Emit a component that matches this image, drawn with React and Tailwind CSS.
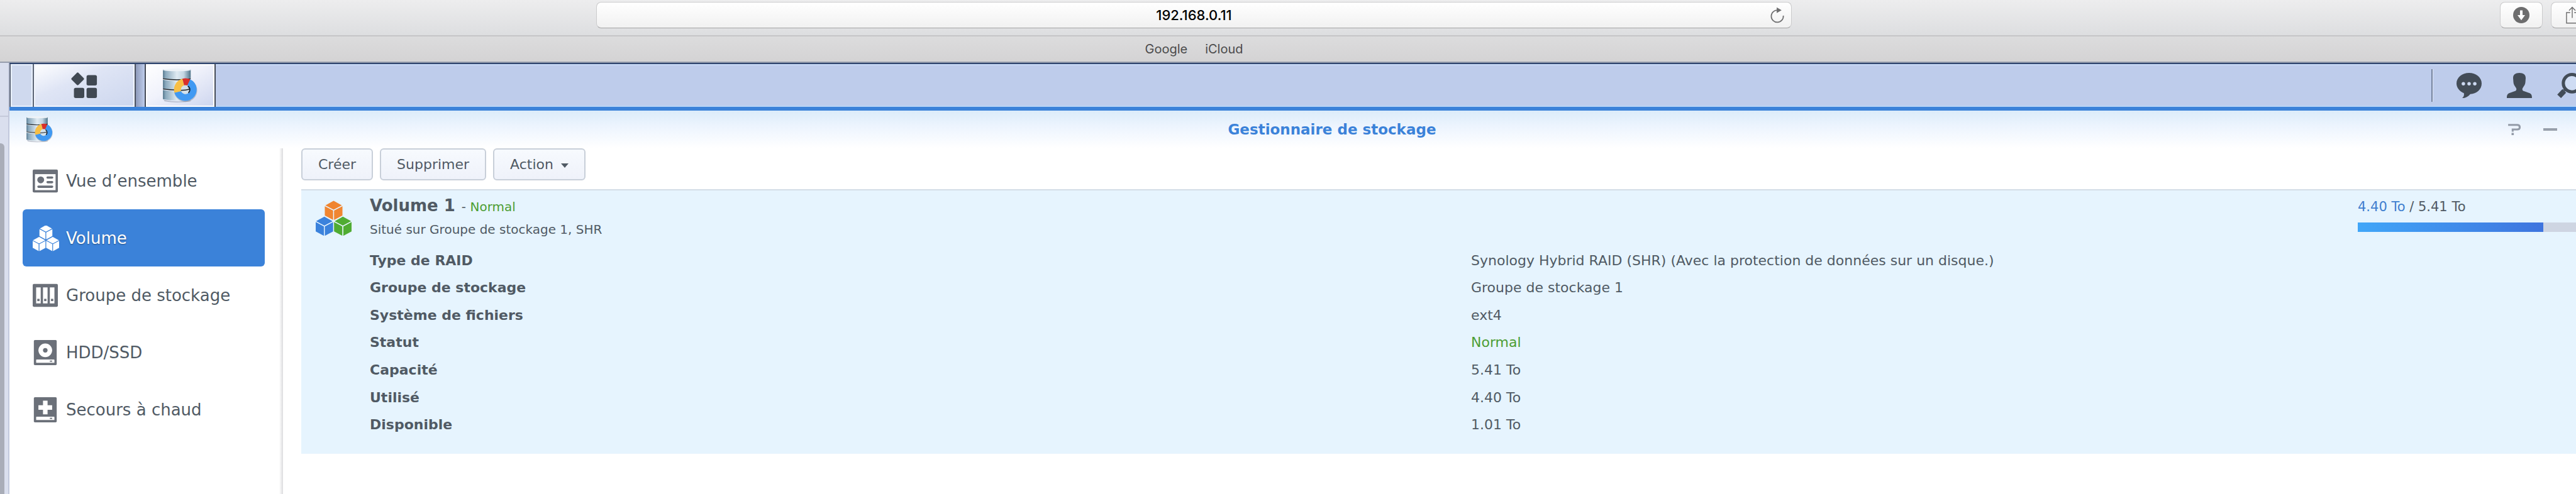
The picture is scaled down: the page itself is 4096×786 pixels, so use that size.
import React from "react";

function DiskIcon({ className, id }) {
  return (
    <svg viewBox="0 0 62 61" className={className} aria-hidden="true">
      <defs>
        <linearGradient id={id} x1="0" x2="1" y1="0" y2="0">
          <stop offset="0" stopColor="#587a90" />
          <stop offset="0.1" stopColor="#8aa9bd" />
          <stop offset="0.5" stopColor="#dfeaf2" />
          <stop offset="0.75" stopColor="#c3d6e2" />
          <stop offset="1" stopColor="#4f7489" />
        </linearGradient>
      </defs>
      <path d="M1 55 Q24 61 49 56 V58 Q24 62 3 58 Z" fill="#9aa0b0" opacity="0.6" />
      <path d="M0 2 H49 V17 Q25 22 0 17 Z" fill={`url(#${id})`} />
      <path d="M0 20 Q25 24 49 20 V35 Q25 40 0 35 Z" fill={`url(#${id})`} />
      <path d="M0 38 Q25 42 49 38 V54 Q25 59 0 54 Z" fill={`url(#${id})`} />
      <path d="M0 18 Q25 22 49 18" fill="none" stroke="#1d2226" strokeWidth="1.6" />
      <path d="M0 36 Q25 40 49 36" fill="none" stroke="#1d2226" strokeWidth="1.6" />
      <ellipse cx="24.5" cy="2.4" rx="24.5" ry="2.4" fill="#edf2f7" />
      <circle cx="40" cy="38.5" r="20.5" fill="#5b6472" opacity="0.3" />
      <circle cx="40" cy="37.3" r="9" fill="#d3e1ea" />
      <path d="M31 38.500 Q40 38.500 49 36" fill="none" stroke="#1d2226" strokeWidth="1.6" />
      <path d="M48 19 A20 20 0 1 1 20.3 42.7 L32 39.8 A8 8 0 1 0 43 30 Z" fill="#4099f2" />
      <path d="M20.3 42.7 A20 20 0 0 1 34.5 17.9 L37.5 29.6 A8 8 0 0 0 32 39.8 Z" fill="#f8bf45" />
      <path d="M34.5 17.9 A20 20 0 0 1 48 19 L43 30 A8 8 0 0 0 37.5 29.6 Z" fill="#d8302b" />
      <path d="M44 31 A7.6 7.6 0 0 1 45 43" fill="none" stroke="#15202b" strokeWidth="2" />
    </svg>
  );
}

function Cube({ x, y, fill, gap }) {
  const p = (pts) => pts.map(([a, b]) => `${a + x},${b + y}`).join(" ");
  return (
    <g fill={fill} stroke={gap} strokeWidth="1.5" strokeLinejoin="round">
      <polygon points={p([[0, -0.5], [16, 8.5], [0, 17], [-16, 8.5]])} />
      <polygon points={p([[-16, 8.5], [0, 17], [0, 35], [-16, 26.5]])} />
      <polygon points={p([[16, 8.5], [0, 17], [0, 35], [16, 26.5]])} />
    </g>
  );
}

function CubesIcon({ className, colors, gap }) {
  return (
    <svg viewBox="0 0 62 62" className={className} aria-hidden="true">
      <Cube x={31} y={0} fill={colors[0]} gap={gap} />
      <Cube x={15} y={27.5} fill={colors[1]} gap={gap} />
      <Cube x={47} y={27.5} fill={colors[2]} gap={gap} />
    </svg>
  );
}

const GREY = "#6b7079";

function OverviewIcon() {
  return (
    <svg viewBox="0 0 44 44" className="size-10" aria-hidden="true">
      <rect y="2" width="44" height="40" rx="2" fill={GREY} />
      <rect x="4" y="10" width="36" height="28" fill="#fff" />
      <circle cx="14" cy="20" r="6" fill={GREY} />
      <path d="M26 16 H34 M26 24 H34 M10 32 H34" stroke={GREY} strokeWidth="4" strokeLinecap="round" />
    </svg>
  );
}

function GroupIcon() {
  return (
    <svg viewBox="0 0 44 44" className="size-10" aria-hidden="true">
      <rect y="2" width="44" height="40" rx="2" fill={GREY} />
      {[6, 18, 30].map((x) => (
        <g key={x}>
          <rect x={x} y="8" width="8" height="28" fill="#fff" />
          <rect x={x + 2} y="28" width="4" height="4" fill={GREY} />
        </g>
      ))}
    </svg>
  );
}

function DriveIcon({ spare }) {
  return (
    <svg viewBox="0 0 44 44" className="size-10" aria-hidden="true">
      <rect x="2" width="40" height="44" rx="2" fill={GREY} />
      {spare ? (
        <path d="M18 6 H26 V14 H34 V22 H26 V30 H18 V22 H10 V14 H18 Z" fill="#fff" />
      ) : (
        <>
          <circle cx="22" cy="18" r="12" fill="#fff" />
          <circle cx="22" cy="18" r="4" fill={GREY} />
        </>
      )}
      <rect x="6" y="34" width="32" height="6" rx="1" fill="#fff" />
      <rect x="30" y="36" width="4" height="2" fill={GREY} />
    </svg>
  );
}

function AppsIcon() {
  return (
    <svg viewBox="0 0 46 46" className="size-[42px]" fill="#414953" aria-hidden="true">
      <rect x="3" y="3" width="17" height="17" rx="2.5" transform="rotate(45 11.5 11.5)" />
      <rect x="27" y="5" width="18" height="18" rx="3" />
      <rect x="5" y="27" width="18" height="18" rx="3" />
      <rect x="27" y="27" width="18" height="18" rx="3" />
    </svg>
  );
}

function ChatIcon() {
  return (
    <svg viewBox="0 0 44 44" className="size-10" aria-hidden="true">
      <path d="M22 0 C34 0 44 8 44 18.5 C44 29 35 37 24 37 C21 41 16 44 10 44 C13 41.500 13.500 39 13 35.500 C5 32 0 26 0 18.500 C0 8 10 0 22 0 Z" fill="#434c57" />
      <circle cx="12" cy="19" r="3" fill="#cdd9f1" />
      <circle cx="22" cy="19" r="3" fill="#cdd9f1" />
      <circle cx="32" cy="19" r="3" fill="#cdd9f1" />
    </svg>
  );
}

function UserIcon() {
  return (
    <svg viewBox="0 0 44 44" className="size-10" aria-hidden="true">
      <path d="M22 0 C29 0 33 3 33 9 L32.500 16 C32.500 20 30 23 28 26 C26.500 28 27 31 30 32 L40 35.500 C43 37 44 39 44 44 H0 C0 39 1 37 4 35.500 L14 32 C17 31 17.500 28 16 26 C14 23 11.500 20 11.500 16 L11 9 C11 3 15 0 22 0 Z" fill="#434c57" />
    </svg>
  );
}

function SearchIcon() {
  return (
    <svg viewBox="0 0 44 44" className="size-10 shrink-0" aria-hidden="true">
      <circle cx="26" cy="18" r="15.200" fill="#cfdcf3" stroke="#434c57" strokeWidth="5.600" />
      <path d="M15 28 L12 31" stroke="#434c57" strokeWidth="5" />
      <path d="M12.500 31.500 L3.500 41" stroke="#434c57" strokeWidth="9" />
    </svg>
  );
}

function BrowserChrome() {
  return (
    <header className="font-[Inter,sans-serif]">
      <div className="grid h-[58px] grid-cols-[948fr_1901fr_1247fr] items-start border-b-2 border-[#c5c5c7] bg-linear-to-b from-[#ededee] to-[#dddee0] pt-[3px]">
        <div />
        <div className="flex h-[42px] items-center rounded-lg border border-[#cbcbcc] border-b-[#a3a3a4] bg-linear-to-b from-white to-[#f1f1f1] pr-1 pl-10">
          <input
            aria-label="Adresse"
            defaultValue="192.168.0.11"
            className="min-w-0 flex-1 bg-transparent text-center text-[22px] leading-7 font-medium text-black outline-none"
          />
          <button aria-label="Recharger" className="flex h-8 w-9 items-center justify-center">
            <svg viewBox="0 0 24 28" className="h-[26px] w-[22px]" aria-hidden="true">
              <path d="M13 5.500 A10.500 10.500 0 1 0 22.500 15" fill="none" stroke="#6f6f70" strokeWidth="1.900" />
              <path d="M11 0.500 L19.500 5.500 L11 10.500 Z" fill="#6f6f70" />
            </svg>
          </button>
        </div>
        <div className="flex justify-end gap-[13px]">
          <button aria-label="Téléchargements" className="flex h-[42px] w-[68px] items-center justify-center rounded-lg border border-[#cbcbcc] border-b-[#a3a3a4] bg-linear-to-b from-white to-[#f1f1f1]">
            <svg viewBox="0 0 28 28" className="size-[26px]" aria-hidden="true">
              <circle cx="14" cy="14" r="14" fill="#6d6d6e" />
              <path d="M11.800 6 H16.200 V14 H20.500 L14 23 L7.500 14 H11.800 Z" fill="#fff" />
            </svg>
          </button>
          <button aria-label="Partager" className="flex h-[42px] w-10 items-center overflow-hidden rounded-l-lg border border-r-0 border-[#cbcbcc] border-b-[#a3a3a4] bg-linear-to-b from-white to-[#f1f1f1] pl-[23px]">
            <svg viewBox="0 0 22 30" className="h-[28px] w-[20px] shrink-0" fill="none" stroke="#6f6f70" strokeWidth="1.600" aria-hidden="true">
              <path d="M7.500 10.500 H1 V29 H21 V10.500 H14.500" />
              <path d="M11 20 V1.500 M5.500 7 L11 1.200 L16.500 7" />
            </svg>
          </button>
        </div>
      </div>
      <nav aria-label="Favoris" className="grid h-10 grid-cols-[948fr_1901fr_1247fr] items-center bg-linear-to-b from-[#dcdcdd] to-[#d4d3d4]">
        <div />
        <div className="flex justify-center gap-7 text-[20px] leading-6 text-[#4b4b4c]">
          <a href="#google">Google</a>
          <a href="#icloud">iCloud</a>
        </div>
      </nav>
    </header>
  );
}

function Taskbar() {
  return (
    <div className="flex h-[76px] items-stretch border-t-2 border-b-6 border-t-[#2f456f] border-b-[#3b82d9] bg-[#becceb]">
      <div className="w-[39px] border-x-2 border-[#5b6474] bg-[#cfd9ee] shadow-[inset_0_0_0_2px_#e9f1fd]" />
      <button aria-label="Menu principal" className="flex w-[160px] items-center justify-center bg-linear-to-br from-white via-[#dfe5f5] via-40% to-[#ccd6ee] shadow-[inset_0_0_0_2px_#f1f5fd]">
        <AppsIcon />
      </button>
      <div className="w-[16px] border-l-2 border-[#4b5260] bg-linear-to-r from-[#8f9bbb] to-[#becceb]" />
      <button aria-label="Gestionnaire de stockage" className="flex w-[113px] items-center justify-center border-x-2 border-[#454b58] bg-linear-to-br from-white via-[#f0f2fb] via-45% to-[#cdd5ee] shadow-[inset_0_0_0_2px_#ffffff]">
        <DiskIcon id="disk-large" className="h-[55px] w-[56px]" />
      </button>
      <div className="flex-1 shadow-[inset_0_2px_0_#c9daf6,inset_0_-2px_0_#b8d4f6]" />
      <div className="flex items-center shadow-[inset_0_2px_0_#c9daf6,inset_0_-2px_0_#b8d4f6]">
        <div className="h-[52px] w-[3px] border-r border-l-2 border-l-[#76849f] border-r-[#dfe8f8]" />
        <button aria-label="Notifications" className="ml-[37px]">
          <ChatIcon />
        </button>
        <button aria-label="Utilisateur" className="ml-10">
          <UserIcon />
        </button>
        <button aria-label="Rechercher" className="ml-10 flex w-[30px] overflow-hidden">
          <SearchIcon />
        </button>
      </div>
    </div>
  );
}

function TitleBar() {
  return (
    <div className="flex h-15 items-center bg-linear-to-b from-[#dcecfa] via-[#eef5fe] via-45% to-white">
      <div className="w-[233px] pl-[27px]">
        <DiskIcon id="disk-small" className="h-[42px] w-[43px]" />
      </div>
      <h1 className="flex-1 text-center text-[23px] leading-8 font-bold text-[#3b82d9]">Gestionnaire de stockage</h1>
      <div className="flex w-[108px] items-center gap-9">
        <button aria-label="Aide">
          <svg viewBox="0 0 22 20" className="h-[18px] w-5" fill="none" stroke="#949ca8" strokeWidth="3.400" aria-hidden="true">
            <path d="M0 2 H16 Q20.500 2 20.500 6 Q20.500 10 16 10 H8 V14" />
            <path d="M8 16 V20" strokeWidth="4" />
          </svg>
        </button>
        <button aria-label="Réduire" className="flex h-[18px] items-center">
          <span className="h-1 w-[22px] bg-[#98a0ab]" />
        </button>
      </div>
    </div>
  );
}

const WHITE3 = ["#fff", "#fff", "#fff"];

const NAV = [
  { label: "Vue d’ensemble", icon: <OverviewIcon /> },
  { label: "Volume", icon: <CubesIcon className="size-[42px]" colors={WHITE3} gap="#3b82d9" />, active: true },
  { label: "Groupe de stockage", icon: <GroupIcon /> },
  { label: "HDD/SSD", icon: <DriveIcon /> },
  { label: "Secours à chaud", icon: <DriveIcon spare /> },
];

function Sidebar() {
  return (
    <aside className="flex w-[435px] shrink-0">
      <nav aria-label="Sections" className="flex-1 pt-[6px] pr-[23px] pl-[21px]">
        {NAV.map(({ label, icon, active }) => (
          <a
            key={label}
            href={"#" + label}
            aria-current={active ? "page" : undefined}
            className={
              "flex h-[91px] items-center rounded-md pl-4 text-[26px] leading-9 " +
              (active ? "bg-[#3b82d9] text-white [text-shadow:0_1px_2px_rgba(0,0,0,0.4)]" : "text-[#505a64]")
            }
          >
            <span className="w-[53px] shrink-0">{icon}</span>
            {label}
          </a>
        ))}
      </nav>
      <div className="w-[6px] bg-linear-to-r from-white to-[#dcdcde]" />
    </aside>
  );
}

const ROWS = [
  ["Type de RAID", "Synology Hybrid RAID (SHR) (Avec la protection de données sur un disque.)"],
  ["Groupe de stockage", "Groupe de stockage 1"],
  ["Système de fichiers", "ext4"],
  ["Statut", "Normal"],
  ["Capacité", "5.41 To"],
  ["Utilisé", "4.40 To"],
  ["Disponible", "1.01 To"],
];

const BUTTON =
  "flex h-[51px] items-center rounded-md border-2 border-[#c8cfd9] bg-linear-to-b from-[#f7fafe] to-[#eff2fa] px-[25px] text-[22px] leading-8";

function VolumePanel() {
  return (
    <section className="mt-[14px] border-t-2 border-[#d3dde7] bg-[#e6f4fe] pb-6 pl-[23px]">
      <div className="flex pt-2">
        <CubesIcon className="mt-2 size-[57px] shrink-0" colors={["#f08530", "#3b82dc", "#50ac32"]} gap="#e6f4fe" />
        <div className="ml-[29px] flex-1">
          <div className="flex h-8 items-baseline gap-[10px]">
            <h2 className="text-[26px] leading-8 font-bold">Volume 1</h2>
            <p className="text-[20px] leading-6">- <span className="text-[#4c9d34]">Normal</span></p>
          </div>
          <p className="mt-[6px] text-[20px] leading-8">Situé sur Groupe de stockage 1, SHR</p>
        </div>
        <div className="w-[347px] pt-[2px]">
          <p className="text-[21px] leading-8">
            <span className="text-[#3f7fcf]">4.40 To</span> / 5.41 To
          </p>
          <div role="progressbar" aria-label="Espace utilisé" aria-valuenow={81} className="mt-[9px] h-[15px] bg-[#ced5e2]">
            <div className="h-full w-[85%] bg-linear-to-r from-[#41a6f8] to-[#3f74de]" />
          </div>
        </div>
      </div>
      <div className="pt-3 pr-[6px] pl-[86px]">
        <table className="h-[305px] w-full table-fixed text-left text-[22px] leading-8">
          <tbody>
            {ROWS.map(([label, value]) => (
              <tr key={label}>
                <th scope="row" className="p-0 font-bold">{label}</th>
                <td className={value === "Normal" ? "p-0 text-[#4c9d34]" : "p-0"}>{value}</td>
              </tr>
            ))}
          </tbody>
        </table>
      </div>
    </section>
  );
}

export default function App() {
  return (
    <div className="flex min-h-screen flex-col overflow-hidden bg-white font-['DejaVu_Sans',Verdana,sans-serif] text-[#505a64]">
      <BrowserChrome />
      <div className="flex flex-1 border-t-2 border-[#969dac]">
        <div className="flex w-[15px] shrink-0 flex-col border-r-2 border-[#c2c8dc] bg-[#dadfee]">
          <div className="h-[86px] border-b-2 border-[#c5cadb]" />
          <div className="mt-[42px] w-[7px] flex-1 rounded-tr-md bg-[#a9adb8]" />
        </div>
        <div className="flex min-w-0 flex-1 flex-col">
          <Taskbar />
          <TitleBar />
          <div className="flex flex-1">
            <Sidebar />
            <main className="min-w-0 flex-1 pl-[29px]">
              <div className="flex gap-[11px]">
                <button className={BUTTON}>Créer</button>
                <button className={BUTTON}>Supprimer</button>
                <button className={BUTTON + " gap-3"}>
                  Action
                  <svg viewBox="0 0 12 7" className="mt-1 h-[7px] w-3" aria-hidden="true">
                    <path d="M0 0 H12 L6 7 Z" fill="#505a64" />
                  </svg>
                </button>
              </div>
              <VolumePanel />
            </main>
          </div>
        </div>
      </div>
    </div>
  );
}
